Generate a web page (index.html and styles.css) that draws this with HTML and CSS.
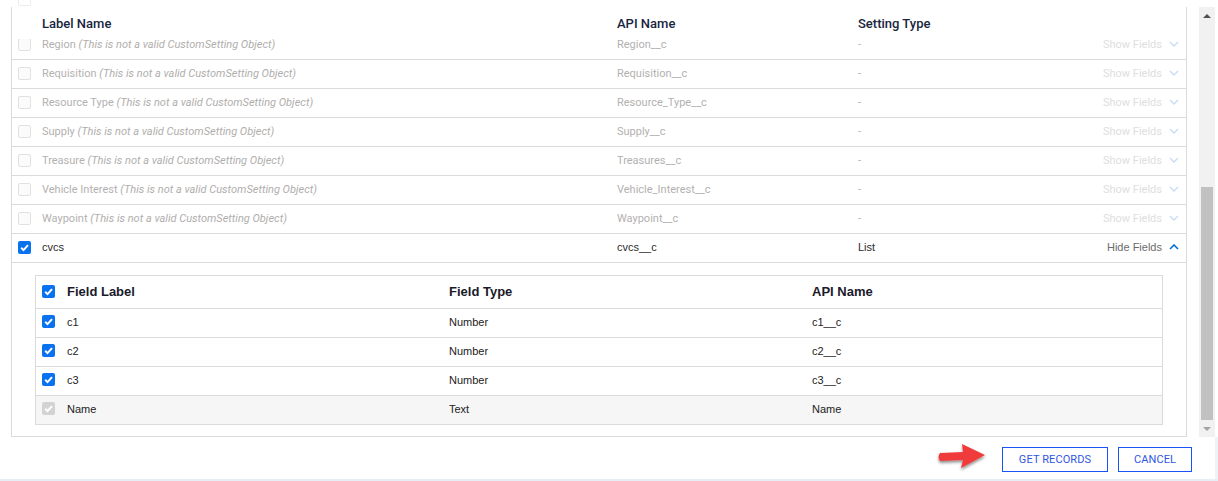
FILE: index.html
```html
<!DOCTYPE html>
<html>
<head>
<meta charset="utf-8">
<link rel="stylesheet" href="styles.css">
</head>
<body>
<div class="page">
  <div class="top-strip"><div class="ghost-box"></div></div>
  <div class="viewport">
    <div class="content">
      <div class="head-row">
        <span></span>
        <span class="th">Label Name</span>
        <span class="th">API Name</span>
        <span class="th">Setting Type</span>
        <span></span>
      </div>
      <div class="rows">
        <div class="row disabled first">
          <span class="cb-cell"><span class="cb"></span></span>
          <span class="lbl">Region <em>(This is not a valid CustomSetting Object)</em></span>
          <span>Region__c</span>
          <span>-</span>
          <span class="act">Show Fields <svg class="chev" width="10" height="6" viewBox="0 0 10 6"><path d="M1 1l4 4 4-4" fill="none" stroke="#c9dcf4" stroke-width="1.4"/></svg></span>
        </div>
        <div class="row disabled">
          <span class="cb-cell"><span class="cb"></span></span>
          <span class="lbl">Requisition <em>(This is not a valid CustomSetting Object)</em></span>
          <span>Requisition__c</span>
          <span>-</span>
          <span class="act">Show Fields <svg class="chev" width="10" height="6" viewBox="0 0 10 6"><path d="M1 1l4 4 4-4" fill="none" stroke="#c9dcf4" stroke-width="1.4"/></svg></span>
        </div>
        <div class="row disabled">
          <span class="cb-cell"><span class="cb"></span></span>
          <span class="lbl">Resource Type <em>(This is not a valid CustomSetting Object)</em></span>
          <span>Resource_Type__c</span>
          <span>-</span>
          <span class="act">Show Fields <svg class="chev" width="10" height="6" viewBox="0 0 10 6"><path d="M1 1l4 4 4-4" fill="none" stroke="#c9dcf4" stroke-width="1.4"/></svg></span>
        </div>
        <div class="row disabled">
          <span class="cb-cell"><span class="cb"></span></span>
          <span class="lbl">Supply <em>(This is not a valid CustomSetting Object)</em></span>
          <span>Supply__c</span>
          <span>-</span>
          <span class="act">Show Fields <svg class="chev" width="10" height="6" viewBox="0 0 10 6"><path d="M1 1l4 4 4-4" fill="none" stroke="#c9dcf4" stroke-width="1.4"/></svg></span>
        </div>
        <div class="row disabled">
          <span class="cb-cell"><span class="cb"></span></span>
          <span class="lbl">Treasure <em>(This is not a valid CustomSetting Object)</em></span>
          <span>Treasures__c</span>
          <span>-</span>
          <span class="act">Show Fields <svg class="chev" width="10" height="6" viewBox="0 0 10 6"><path d="M1 1l4 4 4-4" fill="none" stroke="#c9dcf4" stroke-width="1.4"/></svg></span>
        </div>
        <div class="row disabled">
          <span class="cb-cell"><span class="cb"></span></span>
          <span class="lbl">Vehicle Interest <em>(This is not a valid CustomSetting Object)</em></span>
          <span>Vehicle_Interest__c</span>
          <span>-</span>
          <span class="act">Show Fields <svg class="chev" width="10" height="6" viewBox="0 0 10 6"><path d="M1 1l4 4 4-4" fill="none" stroke="#c9dcf4" stroke-width="1.4"/></svg></span>
        </div>
        <div class="row disabled">
          <span class="cb-cell"><span class="cb"></span></span>
          <span class="lbl">Waypoint <em>(This is not a valid CustomSetting Object)</em></span>
          <span>Waypoint__c</span>
          <span>-</span>
          <span class="act">Show Fields <svg class="chev" width="10" height="6" viewBox="0 0 10 6"><path d="M1 1l4 4 4-4" fill="none" stroke="#c9dcf4" stroke-width="1.4"/></svg></span>
        </div>
        <div class="row active">
          <span class="cb-cell"><span class="cb checked"><svg width="13" height="13" viewBox="0 0 13 13"><path d="M3.2 6.8l2.3 2.3 4.5-5" fill="none" stroke="#fff" stroke-width="2"/></svg></span></span>
          <span class="lbl">cvcs</span>
          <span>cvcs__c</span>
          <span>List</span>
          <span class="act hide">Hide Fields <svg class="chev" width="10" height="6" viewBox="0 0 10 6"><path d="M1 5l4-4 4 4" fill="none" stroke="#0070d2" stroke-width="1.6"/></svg></span>
        </div>
      </div>
      <div class="expanded">
        <div class="inner">
          <div class="irow ihead">
            <span class="cb-cell"><span class="cb checked"><svg width="13" height="13" viewBox="0 0 13 13"><path d="M3.2 6.8l2.3 2.3 4.5-5" fill="none" stroke="#fff" stroke-width="2"/></svg></span></span>
            <span>Field Label</span>
            <span>Field Type</span>
            <span>API Name</span>
          </div>
          <div class="irow">
            <span class="cb-cell"><span class="cb checked"><svg width="13" height="13" viewBox="0 0 13 13"><path d="M3.2 6.8l2.3 2.3 4.5-5" fill="none" stroke="#fff" stroke-width="2"/></svg></span></span>
            <span>c1</span>
            <span>Number</span>
            <span>c1__c</span>
          </div>
          <div class="irow">
            <span class="cb-cell"><span class="cb checked"><svg width="13" height="13" viewBox="0 0 13 13"><path d="M3.2 6.8l2.3 2.3 4.5-5" fill="none" stroke="#fff" stroke-width="2"/></svg></span></span>
            <span>c2</span>
            <span>Number</span>
            <span>c2__c</span>
          </div>
          <div class="irow">
            <span class="cb-cell"><span class="cb checked"><svg width="13" height="13" viewBox="0 0 13 13"><path d="M3.2 6.8l2.3 2.3 4.5-5" fill="none" stroke="#fff" stroke-width="2"/></svg></span></span>
            <span>c3</span>
            <span>Number</span>
            <span>c3__c</span>
          </div>
          <div class="irow locked">
            <span class="cb-cell"><span class="cb checked grey"><svg width="13" height="13" viewBox="0 0 13 13"><path d="M3.2 6.8l2.3 2.3 4.5-5" fill="none" stroke="#fff" stroke-width="2"/></svg></span></span>
            <span>Name</span>
            <span>Text</span>
            <span>Name</span>
          </div>
        </div>
      </div>
    </div>
    <div class="gutter"></div>
    <div class="scrollbar">
      <div class="sb-btn"><span class="tri-up"></span></div>
      <div class="sb-track"><div class="sb-thumb"></div></div>
      <div class="sb-btn"><span class="tri-down"></span></div>
    </div>
  </div>
  <div class="footer">
    <svg class="arrow" width="54" height="32" viewBox="0 0 54 32">
      <defs>
        <filter id="sh" x="-20%" y="-30%" width="150%" height="170%">
          <feDropShadow dx="0" dy="2" stdDeviation="1.4" flood-color="#000" flood-opacity="0.45"/>
        </filter>
      </defs>
      <path d="M4 12 Q1 16 4 20 L27 19 L25 27 L49 14 L26 3 L27 11 Z" fill="#ef3b3b" filter="url(#sh)"/>
    </svg>
    <button class="btn">GET RECORDS</button>
    <button class="btn">CANCEL</button>
  </div>
</div>
</body>
</html>
```
FILE: styles.css
```css
* { box-sizing: border-box; }
html, body { margin: 0; padding: 0; background: #fff; }
.page {
  width: 1218px;
  height: 481px;
  display: flex;
  flex-direction: column;
  overflow: hidden;
  border-bottom: 2px solid #e7eef6;
  font-family: Roboto, "Liberation Sans", sans-serif;
}
.top-strip { height: 7px; }
.ghost-box {
  margin-left: 18px;
  width: 13px;
  height: 6px;
  border: 1px solid #ececec;
  border-top: none;
  border-radius: 0 0 2px 2px;
}
.viewport {
  display: flex;
  height: 430px;
  margin-left: 11px;
}
.content {
  width: 1176px;
  height: 430px;
  display: flex;
  flex-direction: column;
  border-left: 1px solid #dddbda;
  border-right: 1px solid #dddbda;
  border-bottom: 1px solid #dddbda;
  overflow: hidden;
}
.head-row, .row {
  display: grid;
  grid-template-columns: 30px 575px 241px 1fr auto;
  align-items: center;
  padding-right: 7px;
}
.head-row { height: 32px; flex: none; padding-top: 1px; }
.th {
  font-size: 13px;
  font-weight: 500;
  color: #182640;
}
.rows {
  height: 224px;
  flex: none;
  overflow: hidden;
}
.row {
  height: 29px;
  border-bottom: 1px solid #dddbda;
  font-size: 11px;
  padding-bottom: 2px;
}
.row.first { margin-top: -8px; }
.cb-cell { padding-left: 6px; display: flex; align-items: center; }
.cb {
  width: 13px;
  height: 13px;
  border: 1px solid #e1e1e1;
  border-radius: 2px;
  background: #fbfbfb;
  display: block;
}
.cb.checked {
  border: none;
  background: #0a72ef;
  border-radius: 2px;
}
.cb.checked svg { display: block; }
.cb.grey { background: #d3d3d3; }
.row.disabled { color: #b3b1b0; }
.row.disabled em { font-style: italic; color: #b0aeac; }
.act {
  display: flex;
  align-items: center;
  gap: 7px;
  color: #dedede;
  font-size: 11px;
}
.chev { display: block; }
.row.active { font-family: "Liberation Sans", Arial, sans-serif; color: #2b2b2b; }
.act.hide { color: #6b6b6b; font-family: "Liberation Sans", Arial, sans-serif; }
.expanded {
  padding: 12px 23px 11px 23px;
  flex: none;
}
.inner {
  border: 1px solid #dddbda;
  font-family: "Liberation Sans", Arial, sans-serif;
}
.irow {
  display: grid;
  grid-template-columns: 31px 382px 363px 1fr;
  align-items: center;
  height: 29px;
  border-bottom: 1px solid #dddbda;
  font-size: 11px;
  color: #222;
  padding-bottom: 3px;
}
.irow:last-child { border-bottom: none; height: 28px; }
.irow.ihead {
  height: 33px;
  font-size: 13px;
  font-weight: bold;
  color: #1a1a2a;
  padding-bottom: 2px;
}
.irow.locked { background: #f6f6f6; }
.gutter { width: 12px; flex: none; }
.scrollbar {
  width: 16px;
  flex: none;
  background: #f1f1f1;
  display: flex;
  flex-direction: column;
}
.sb-btn {
  height: 17px;
  display: flex;
  align-items: center;
  justify-content: center;
}
.tri-up {
  width: 0; height: 0;
  border-left: 4px solid transparent;
  border-right: 4px solid transparent;
  border-bottom: 4px solid #505050;
}
.tri-down {
  width: 0; height: 0;
  border-left: 4px solid transparent;
  border-right: 4px solid transparent;
  border-top: 4px solid #a3a3a3;
}
.sb-track {
  flex: 1;
  padding-top: 163px;
  padding-left: 2px;
  padding-right: 2px;
  display: flex;
  flex-direction: column;
}
.sb-thumb { flex: 1; background: #c1c1c1; }
.footer {
  flex: 1;
  display: flex;
  align-items: flex-start;
  justify-content: flex-end;
  padding-top: 10px;
  padding-right: 23px;
  border-right: 3px solid #eef3f8;
}
.arrow { display: block; margin-right: 12px; margin-top: -6px; }
.btn {
  height: 25px;
  padding: 0;
  border: 1.5px solid #1b54f5;
  background: #fff;
  color: #3056e0;
  font-family: Roboto, "Liberation Sans", sans-serif;
  font-size: 11px;
  letter-spacing: 0.1px;
  margin-left: 10px;
  border-radius: 0;
}
.btn:first-of-type { margin-left: 0; width: 106px; }
.btn:last-of-type { width: 74px; }
```
